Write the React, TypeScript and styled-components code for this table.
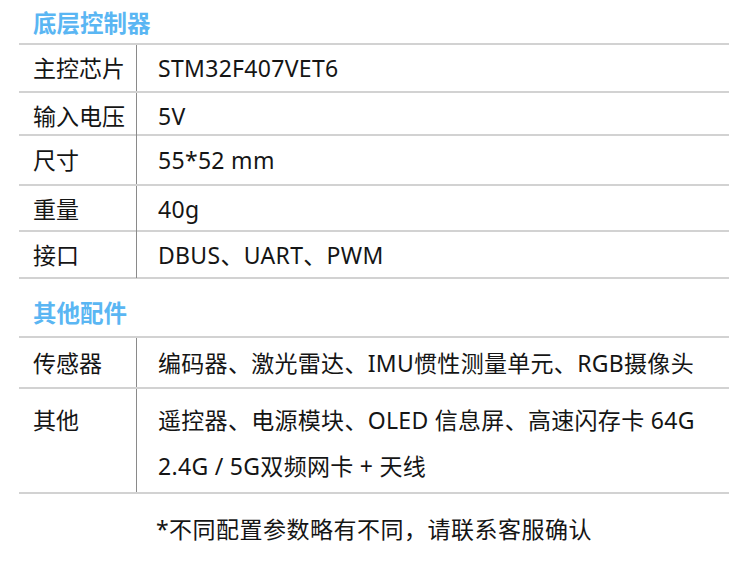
import React from "react";
import styled, { createGlobalStyle } from "styled-components";

type Spec = {
  label: string;
  lines: string[];
  height: number;
};

const controller: Spec[] = [
  { label: "主控芯片", lines: ["STM32F407VET6"], height: 48 },
  { label: "输入电压", lines: ["5V"], height: 43 },
  { label: "尺寸", lines: ["55*52 mm"], height: 50 },
  { label: "重量", lines: ["40g"], height: 46 },
  { label: "接口", lines: ["DBUS、UART、PWM"], height: 47 },
];

const accessories: Spec[] = [
  { label: "传感器", lines: ["编码器、激光雷达、IMU惯性测量单元、RGB摄像头"], height: 51 },
  {
    label: "其他",
    lines: ["遥控器、电源模块、OLED 信息屏、高速闪存卡 64G", "2.4G / 5G双频网卡 + 天线"],
    height: 105,
  },
];

const SpecTable: React.FC<{ rows: Spec[] }> = ({ rows }) => (
  <Table>
    {rows.map((row) => {
      const multi = row.lines.length > 1;
      return (
        <Row key={row.label} $height={row.height}>
          <Label $multi={multi}>{row.label}</Label>
          <Value $multi={multi}>
            {row.lines.map((line) => (
              <Line key={line}>{line}</Line>
            ))}
          </Value>
        </Row>
      );
    })}
  </Table>
);

const App: React.FC = () => {
  return (
    <>
      <GlobalStyle />
      <Page>
        <SectionTitle $height={43}>底层控制器</SectionTitle>
        <SpecTable rows={controller} />
        <SectionTitle $height={57}>其他配件</SectionTitle>
        <SpecTable rows={accessories} />
        <Note>*不同配置参数略有不同，请联系客服确认</Note>
      </Page>
    </>
  );
};

export default App;

// Styled Components

const GlobalStyle = createGlobalStyle`
  html, body {
    margin: 0;
    padding: 0;
    background: #fff;
  }
  body {
    font-family: "Noto Sans", "Noto Sans CJK SC", sans-serif;
    color: #151515;
  }
`;

const Page = styled.div`
  width: 750px;
  height: 563px;
  box-sizing: border-box;
  padding: 0 21px 0 19px;
  overflow: hidden;
`;

const SectionTitle = styled.h2<{ $height: number }>`
  margin: 0;
  height: ${(p) => p.$height}px;
  display: flex;
  align-items: center;
  padding-left: 14px;
  padding-top: ${(p) => (p.$height > 50 ? 8 : 0)}px;
  box-sizing: border-box;
  font-size: 23.5px;
  font-weight: 700;
  color: #5ab6f3;
`;

const Table = styled.div`
  border-top: 2px solid #d2d2d2;
`;

const Row = styled.div<{ $height: number }>`
  display: grid;
  grid-template-columns: 118px 1fr;
  height: ${(p) => p.$height}px;
  box-sizing: border-box;
  border-bottom: 2px solid #d2d2d2;
`;

const Label = styled.div<{ $multi: boolean }>`
  display: flex;
  align-items: ${(p) => (p.$multi ? "flex-start" : "center")};
  padding: ${(p) => (p.$multi ? "8px 0 0 14px" : "0 0 0 14px")};
  line-height: 46px;
  border-right: 1px solid #8a8a8a;
  font-size: 23px;
`;

const Value = styled.div<{ $multi: boolean }>`
  display: flex;
  flex-direction: column;
  justify-content: ${(p) => (p.$multi ? "flex-start" : "center")};
  padding: ${(p) => (p.$multi ? "8px 0 0 21px" : "0 0 0 21px")};
  font-size: 23px;
  letter-spacing: 0.3px;
`;

const Line = styled.div`
  line-height: 46px;
  white-space: nowrap;
`;

const Note = styled.p`
  margin: 0;
  height: 68px;
  display: flex;
  align-items: center;
  justify-content: center;
  font-size: 23px;
  letter-spacing: 0.5px;
`;
